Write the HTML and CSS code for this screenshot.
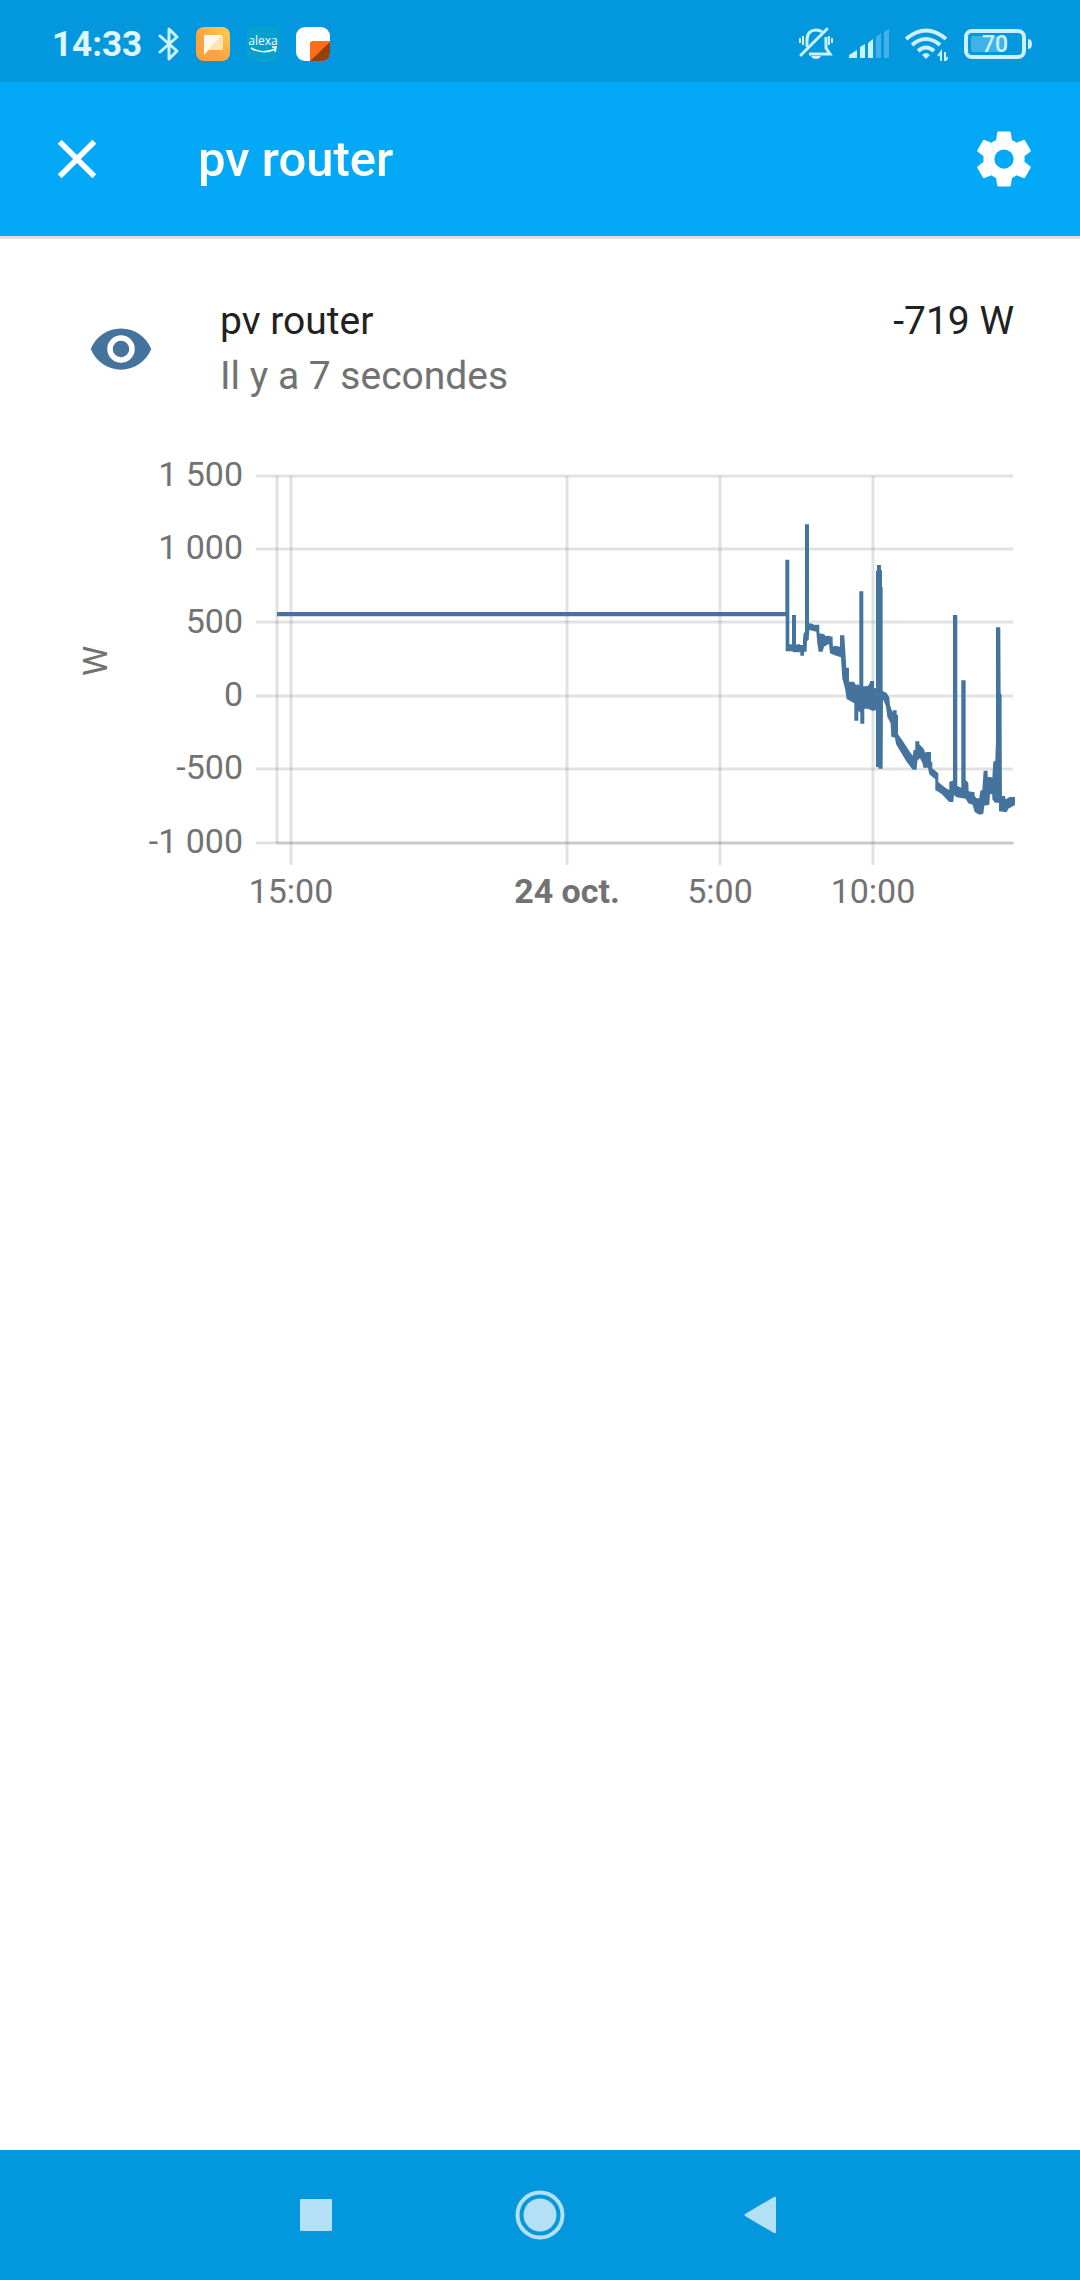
FILE: index.html
```
<!DOCTYPE html>
<html lang="fr">
<head>
    <meta charset="UTF-8">
    <meta name="viewport" content="width=device-width, initial-scale=1.0">
    <title>pv router</title>
    <link rel="stylesheet" href="styles.css">
</head>
<body>
    <div class="status-bar">
        <div class="status-left">
            <span class="clock">14:33</span>
            <svg class="bluetooth" width="22" height="34" viewBox="0 0 22 34" fill="none" stroke="currentColor" stroke-width="3" stroke-linejoin="round" stroke-linecap="round">
                <path d="M2 9l17 15-8 8V2l8 8L2 25"/>
            </svg>
            <svg width="34" height="34" viewBox="0 0 34 34">
                <defs>
                    <linearGradient id="amber" x1="0" y1="1" x2="1" y2="0">
                        <stop offset="0.4" stop-color="#ffa23e"/>
                        <stop offset="1" stop-color="#ffcf4f"/>
                    </linearGradient>
                </defs>
                <rect width="34" height="34" rx="8" fill="url(#amber)"/>
                <path d="M8 8h17q2 0 2 2v11q0 2-2 2H13l-5 5z" fill="#ffe3b0"/>
                <path d="M8 8h18L8 27z" fill="#fff8ec"/>
            </svg>
            <svg width="34" height="34" viewBox="0 0 34 34">
                <rect width="34" height="34" rx="8" fill="#069fd0"/>
                <text class="alexa" x="17" y="18" text-anchor="middle">alexa</text>
                <path d="M5 21q12 7 24 1M26 20h4l-1 5" fill="none" stroke="#fff" stroke-width="1.5"/>
            </svg>
            <svg width="34" height="34" viewBox="0 0 34 34">
                <rect width="34" height="34" rx="9" fill="#fff"/>
                <path d="M14 34V17q0-3 3-3h17v11q0 9-9 9z" fill="#ff6d16"/>
                <path d="M34 15v10q0 9-9 9H14z" fill="#93400f"/>
            </svg>
        </div>
        <div class="status-right">
            <svg width="34" height="34" viewBox="0 0 34 34" fill="none" stroke="currentColor" stroke-width="3">
                <path d="M8 20V13C8 6 12 3 17 3q4 0 6 2M27 10v11l4 6H10"/>
                <path d="M2 28L28 2" stroke-linecap="round"/>
                <path d="M4 9v9M1 11v5M30 9v9M33 11v5" stroke-width="2"/>
                <path d="M12 29h10q-1 3-5 3t-5-3z" fill="currentColor" stroke="none"/>
            </svg>
            <svg width="40" height="30" viewBox="0 0 40 30" fill="currentColor">
                <path d="M0 29v-3l8-5v8zM11 29V18l5-3v14zM19 29V14l5-4v19z"/>
                <path d="M27 29V8l5-4v25zM35 29V3l5-3v29z" opacity="0.3"/>
            </svg>
            <svg width="43" height="34" viewBox="0 0 43 34" fill="none" stroke="currentColor" stroke-width="4">
                <path d="M1 12q20-17 40 0M7 18q14-12 28 0M13 24q8-7 16 0"/>
                <path d="M17 28q4-4 8 0l-4 4z" fill="currentColor" stroke="none"/>
                <path d="M36 34V25l-3 4M40 25v9l3-4" stroke-width="2"/>
            </svg>
            <svg width="68" height="30" viewBox="0 0 68 30">
                <rect x="2" y="2" width="58" height="26" rx="6" fill="none" stroke="currentColor" stroke-width="4"/>
                <rect x="7" y="7" width="34" height="16" rx="2" fill="currentColor" opacity="0.3"/>
                <path d="M64 10q4 0 4 5t-4 5z" fill="currentColor"/>
                <text class="battery" x="31" y="23" text-anchor="middle">70</text>
            </svg>
        </div>
    </div>

    <header class="app-bar">
        <button class="icon-button" type="button" aria-label="Fermer">
            <svg viewBox="0 0 24 24"><path d="M19,6.41L17.59,5L12,10.59L6.41,5L5,6.41L10.59,12L5,17.59L6.41,19L12,13.41L17.59,19L19,17.59L13.41,12L19,6.41Z"/></svg>
        </button>
        <h1>pv router</h1>
        <button class="icon-button" type="button" aria-label="Paramètres">
            <svg viewBox="0 0 24 24"><path d="M12,15.5A3.5,3.5 0 0,1 8.500,12A3.5,3.5 0 0,1 12,8.500A3.5,3.5 0 0,1 15.500,12A3.5,3.5 0 0,1 12,15.5M19.43,12.97C19.47,12.65 19.5,12.33 19.5,12C19.5,11.67 19.47,11.34 19.43,11L21.54,9.37C21.73,9.22 21.78,8.95 21.66,8.73L19.66,5.27C19.54,5.05 19.27,4.96 19.05,5.05L16.56,6.05C16.04,5.66 15.5,5.32 14.87,5.07L14.5,2.42C14.46,2.18 14.25,2 14,2H10C9.75,2 9.54,2.18 9.5,2.42L9.13,5.07C8.5,5.32 7.96,5.66 7.44,6.05L4.95,5.05C4.73,4.96 4.46,5.05 4.34,5.27L2.34,8.73C2.21,8.95 2.27,9.22 2.46,9.37L4.57,11C4.53,11.34 4.5,11.67 4.5,12C4.5,12.33 4.53,12.65 4.57,12.97L2.46,14.63C2.27,14.78 2.21,15.05 2.34,15.27L4.34,18.73C4.46,18.95 4.73,19.03 4.95,18.95L7.44,17.94C7.96,18.34 8.5,18.68 9.13,18.93L9.5,21.58C9.54,21.82 9.75,22 10,22H14C14.25,22 14.46,21.82 14.5,21.58L14.87,18.93C15.5,18.67 16.04,18.34 16.56,17.94L19.05,18.95C19.27,19.03 19.54,18.95 19.66,18.73L21.66,15.27C21.78,15.05 21.73,14.78 21.54,14.63L19.43,12.97Z"/></svg>
        </button>
    </header>

    <main>
        <div class="state">
            <svg class="state-icon" viewBox="0 0 24 24"><path d="M12,9A3,3 0 0,0 9,12A3,3 0 0,0 12,15A3,3 0 0,0 15,12A3,3 0 0,0 12,9M12,17A5,5 0 0,1 7,12A5,5 0 0,1 12,7A5,5 0 0,1 17,12A5,5 0 0,1 12,17M12,4.5C7,4.5 2.73,7.61 1,12C2.73,16.39 7,19.5 12,19.5C17,19.5 21.27,16.39 23,12C21.27,7.61 17,4.5 12,4.5Z"/></svg>
            <div class="state-info">
                <div class="state-name">pv router</div>
                <div class="state-time">Il y a 7 secondes</div>
            </div>
            <div class="state-value">-719 W</div>
        </div>

        <svg class="chart" viewBox="0 0 1080 480" role="img" aria-label="Historique pv router">
            <!-- grid -->
            <path class="grid" d="M256 36H1013M256 109H1013M256 182H1013M256 256H1013M256 329H1013M256 403H1013"/>
            <path class="grid" d="M277 36V403M291 36V425M567 36V425M720 36V425M873 36V425"/>
            <path class="grid" d="M276 403H1014"/>

            <!-- y axis -->
            <g text-anchor="end">
                <text x="243" y="46">1 500</text>
                <text x="243" y="119">1 000</text>
                <text x="243" y="193">500</text>
                <text x="243" y="266">0</text>
                <text x="243" y="339">-500</text>
                <text x="243" y="413">-1 000</text>
            </g>
            <text transform="rotate(-90 107 221)" x="107" y="221" text-anchor="middle">W</text>

            <!-- x axis -->
            <g text-anchor="middle">
                <text x="291" y="463">15:00</text>
                <text class="day" x="567" y="463">24 oct.</text>
                <text x="720" y="463">5:00</text>
                <text x="873" y="463">10:00</text>
            </g>

            <!-- power, min/max envelope -->
            <g class="series" transform="translate(600) scale(0.3333)">
                <path d="M-969 516H556V359H568V613H576V525H588V614L597 612 602 615H609V599L611 580 615 576V253H627V550L641 552V556L645 554H658V580L673 583 676 588 684 587 698 590V607L699 620 704 617 720 620V586H733L737 650 739 683H747V725H762L768 735 775 733 778 738V454H790V739L804 738 810 728V723H822V744L828 745V392H831V375H843V391H846V442H848V753L860 759 868 772 870 795 878 818V811H890V824H894V882L908 902 930 936 938 947 941 930H946V904H958V913L970 925 976 938 980 936H993V965H997V985L1015 1000V1026L1038 1045 1048 1050V1025L1059 1022V525H1072V1038L1084 1043V721H1097V1020L1105 1028 1106 1054 1124 1057V1068L1130 1075H1138L1141 1052 1147 1050 1151 992H1163V1010L1175 1012 1177 1015 1180 965 1186 962 1188 905V562H1201L1202 760 1205 764V850L1206 1068H1215L1217 1078 1230 1071H1245V1095L1225 1106 1220 1117 1197 1114V1088H1185L1177 1078V1063H1170L1168 1094 1153 1097 1150 1121 1138 1124 1124 1116 1118 1094 1105 1090 1097 1076 1070 1072 1062 1065 1060 1086H1048L1025 1062 1006 1050V1018L988 1003 984 983H970L968 970 960 955 952 962 950 989H938L920 965 902 935 888 912 885 893 874 890 872 850 862 830 858 798 849 778 848 986H836L835 981H828V810L818 813 804 806H793V851H781V818L775 812V842H763V790L740 777 735 745 727 715 723 652 704 646 690 640 687 612 672 620 668 635H656L652 610 649 575 628 570 626 600 621 603 620 634 612 637V647H601V637H580L578 634H557V529H-969z"/>
            </g>
        </svg>
    </main>

    <nav class="nav-bar">
        <button type="button" aria-label="Applications récentes">
            <svg width="50" height="50" viewBox="0 0 50 50"><rect x="9" y="9" width="32" height="32" rx="1"/></svg>
        </button>
        <button type="button" aria-label="Accueil">
            <svg width="50" height="50" viewBox="0 0 50 50"><circle cx="25" cy="25" r="16.500"/><circle class="ring" cx="25" cy="25" r="22.500"/></svg>
        </button>
        <button type="button" aria-label="Retour">
            <svg width="50" height="50" viewBox="0 0 50 50"><path d="M6 24L35 7q2-1 2 1v34q0 2-2 1L6 26q-1-1 0-2z"/></svg>
        </button>
    </nav>
</body>
</html>
```

FILE: styles.css
```
body {
    display: flex;
    flex-direction: column;
    min-height: 100vh;
    margin: 0;
    font-family: Roboto, sans-serif;
    background-color: #fff;
    color: #212121;
}

button {
    padding: 0;
    border: none;
    background: none;
    cursor: pointer;
}

svg {
    display: block;
}

/* phone status bar */
.status-bar {
    display: flex;
    justify-content: space-between;
    align-items: center;
    box-sizing: border-box;
    height: 82px;
    padding: 6px 48px 0 52px;
    background-color: #0398dd;
    color: #cdf0ff;
}

.status-left,
.status-right {
    display: flex;
    align-items: center;
    gap: 16px;
}

.clock {
    font-size: 35px;
    font-weight: 700;
    color: #e0f6ff;
}

.alexa {
    font-family: "Open Sans", sans-serif;
    font-size: 12px;
    fill: #fff;
}

.battery {
    font-size: 23px;
    font-weight: 500;
    fill: #cdf0ff;
}

/* dialog header */
.app-bar {
    display: flex;
    align-items: center;
    height: 154px;
    padding: 0 43px 0 44px;
    border-bottom: 3px solid #e0e0e0;
    background-color: #03a9f6;
    color: #fff;
}

.app-bar h1 {
    flex: 1;
    margin: 0;
    padding-left: 88px;
    font-size: 49px;
    font-weight: 500;
}

.icon-button {
    width: 66px;
    height: 66px;
    color: #fff;
}

.icon-button svg {
    fill: currentColor;
}

/* entity state and history */
main {
    flex: 1;
    padding-top: 55px;
}

.state {
    display: flex;
    align-items: center;
    padding: 0 66px 0 88px;
    font-size: 39px;
    line-height: 55px;
}

.state-icon {
    width: 66px;
    height: 66px;
    fill: #44739e;
}

.state-info {
    flex: 1;
    padding-left: 66px;
}

.state-time {
    color: #727272;
}

.state-value {
    align-self: flex-start;
}

.chart {
    width: 100%;
    margin-top: 36px;
    font-size: 34px;
    fill: #727272;
}

.chart .day {
    font-weight: 700;
}

.grid {
    fill: none;
    stroke: rgba(110, 110, 110, 0.2);
    stroke-width: 3;
}

.series {
    fill: #44739e;
}

/* phone navigation bar */
.nav-bar {
    display: flex;
    justify-content: center;
    align-items: center;
    gap: 124px;
    height: 130px;
    background-color: #0398dd;
}

.nav-bar button {
    display: flex;
    justify-content: center;
    width: 100px;
}

.nav-bar svg {
    fill: #b3e0f4;
}

.nav-bar .ring {
    fill: none;
    stroke: #b3e0f4;
    stroke-width: 4;
}
```
